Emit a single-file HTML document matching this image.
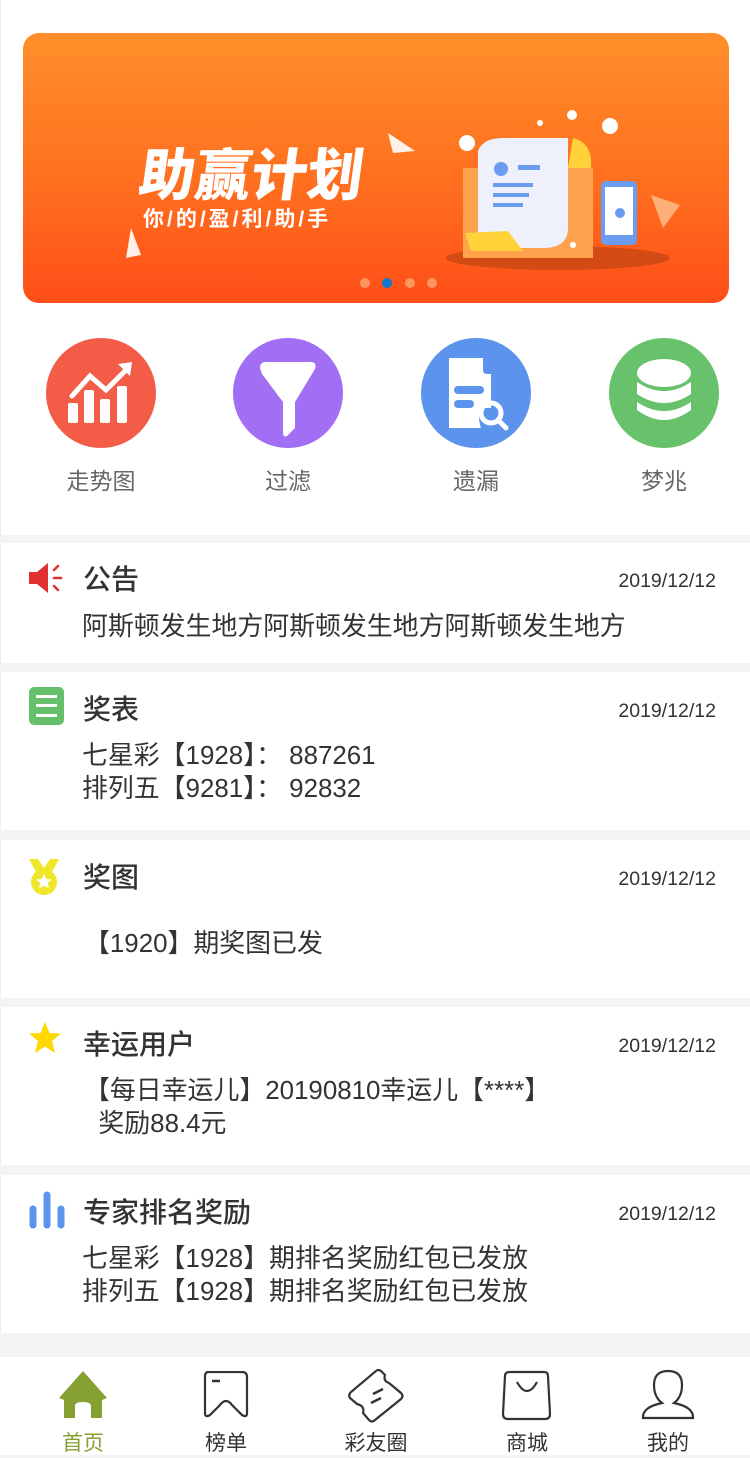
<!DOCTYPE html>
<html><head><meta charset="utf-8"><style>
*{margin:0;padding:0;box-sizing:border-box}
body{width:750px;height:1458px;background:#f4f4f4;font-family:"Liberation Sans","Noto Sans CJK SC",sans-serif;color:#333;position:relative;overflow:hidden}
.abs{position:absolute}
.top{left:0;top:0;width:750px;height:535px;background:#fff;border-left:1px solid #eee}
.banner{left:23px;top:33px;width:706px;height:270px;border-radius:16px;background:linear-gradient(180deg,#ff8f2a 0%,#ff6c1e 60%,#ff4e18 100%);overflow:hidden}
.circ{width:110px;height:110px;border-radius:50%;top:338px}
.lbl{top:462px;width:160px;text-align:center;font-size:23px;color:#666}
.card{left:0;width:750px;background:#fff;border-left:1px solid #eee}
.t{left:83px;font-size:28px;font-weight:500;color:#333}
.d{right:34px;font-size:19.5px;color:#333}
.b{left:82px;font-size:25.9px;line-height:33px;color:#333}
.tab{left:0;top:1357px;width:750px;height:98px;background:#fff}
.ti{font-size:21px;color:#333;width:120px;text-align:center;top:1427px}
</style></head><body>
<div class="abs top"></div>
<div class="abs banner">
 <div class="abs" style="left:117px;top:98px;font-size:56px;font-weight:900;color:#fff;letter-spacing:0px;transform:skewX(-8deg)">助赢计划</div>
 <div class="abs" style="left:120px;top:170px;font-size:21px;font-weight:bold;color:#fff;letter-spacing:3px">你/的/盈/利/助/手</div>
 <svg class="abs" style="left:0;top:0" width="706" height="270">
  <polygon points="365,100 392,118 370,120" fill="#fff" opacity=".9"/>
  <polygon points="108,195 118,222 103,225" fill="#fff" opacity=".9"/>
  <polygon points="628,162 657,172 640,195" fill="#ffb07a"/>
  <ellipse cx="535" cy="225" rx="112" ry="12" fill="#d44a14"/>
  <rect x="440" y="135" width="130" height="90" fill="#ffa24e"/>
  <path d="M455 118 Q460 105 480 105 L545 105 L545 195 Q545 215 520 215 L455 215 Z" fill="#eef0fb"/>
  <path d="M550 105 Q570 110 568 135 L545 135 Z" fill="#ffd23a"/>
  <path d="M442 200 L485 198 L500 218 L448 218 Z" fill="#ffd23a"/>
  <rect x="470" y="150" width="40" height="4" fill="#6b9cf0"/><rect x="470" y="160" width="36" height="4" fill="#6b9cf0"/><rect x="470" y="170" width="30" height="4" fill="#6b9cf0"/>
  <rect x="495" y="132" width="22" height="5" fill="#6b9cf0"/><circle cx="478" cy="136" r="7" fill="#6b9cf0"/>
  <rect x="578" y="148" width="36" height="64" rx="5" fill="#6b9cf0"/><rect x="582" y="154" width="28" height="48" fill="#fff"/>
  <circle cx="597" cy="180" r="5" fill="#6b9cf0"/>
  <circle cx="444" cy="110" r="8" fill="#fff"/><circle cx="587" cy="93" r="8" fill="#fff"/><circle cx="549" cy="82" r="5" fill="#fff"/><circle cx="517" cy="90" r="3" fill="#fff"/><circle cx="550" cy="212" r="3" fill="#fff"/>
  <circle cx="342" cy="250" r="5" fill="#ff9660"/><circle cx="364" cy="250" r="5" fill="#0b7ad0"/><circle cx="387" cy="250" r="5" fill="#ff9660"/><circle cx="409" cy="250" r="5" fill="#ff9660"/>
 </svg>
</div>
<div class="abs circ" style="left:46px;background:#f35d48"><svg width="110" height="110"><g fill="#fff"><rect x="22" y="65" width="10" height="20" rx="2"/><rect x="38" y="52" width="10" height="33" rx="2"/><rect x="54" y="61" width="10" height="24" rx="2"/><rect x="71" y="48" width="10" height="37" rx="2"/></g><polyline points="26,58 44,38 60,52 82,30" fill="none" stroke="#fff" stroke-width="5" stroke-linecap="round"/><polygon points="72,26 86,24 84,38" fill="#fff"/></svg></div>
<div class="abs circ" style="left:233px;background:#a26ef4"><svg width="110" height="110"><path d="M27 30 Q27 24 33 24 L78 24 Q84 24 82 31 L62 64 L62 90 L54 98 Q50 100 50 94 L50 64 L29 36 Z" fill="#fff"/></svg></div>
<div class="abs circ" style="left:421px;background:#5b93ed"><svg width="110" height="110"><path d="M28 20 L62 20 L62 32 Q62 36 66 36 L70 36 L70 70 L60 70 Q56 78 60 90 L28 90 Z" fill="#fff"/><rect x="33" y="48" width="30" height="8" rx="4" fill="#5b93ed"/><rect x="33" y="62" width="20" height="8" rx="4" fill="#5b93ed"/><circle cx="70" cy="75" r="10" fill="none" stroke="#fff" stroke-width="5"/><line x1="77" y1="82" x2="85" y2="90" stroke="#fff" stroke-width="5" stroke-linecap="round"/></svg></div>
<div class="abs circ" style="left:609px;background:#68c26c"><svg width="110" height="110"><g fill="#fff"><ellipse cx="55" cy="35" rx="27" ry="14"/><path d="M28 44 Q55 62 82 44 L82 56 Q55 74 28 56Z"/><path d="M28 64 Q55 82 82 64 L82 72 Q55 92 28 72Z"/></g></svg></div>
<div class="abs lbl" style="left:21px">走势图</div>
<div class="abs lbl" style="left:208px">过滤</div>
<div class="abs lbl" style="left:396px">遗漏</div>
<div class="abs lbl" style="left:584px">梦兆</div>

<div class="abs card" style="top:543px;height:120px"></div>
<svg class="abs" style="left:28px;top:562px" width="36" height="32"><path d="M1 10 L9 10 L20 1 L20 31 L9 22 L1 22 Z" fill="#e03232"/><g stroke="#e03232" stroke-width="2.5" stroke-linecap="round"><line x1="26" y1="8" x2="30" y2="4"/><line x1="26" y1="16" x2="33" y2="16"/><line x1="26" y1="24" x2="30" y2="28"/></g></svg>
<div class="abs t" style="top:558px">公告</div><div class="abs d" style="top:570px">2019/12/12</div>
<div class="abs b" style="top:611px">阿斯顿发生地方阿斯顿发生地方阿斯顿发生地方</div>

<div class="abs card" style="top:672px;height:158px"></div>
<svg class="abs" style="left:29px;top:687px" width="35" height="38"><rect width="35" height="38" rx="5" fill="#66c06b"/><rect x="7" y="8" width="21" height="3" fill="#fff"/><rect x="7" y="17" width="21" height="3" fill="#fff"/><rect x="7" y="27" width="21" height="3" fill="#fff"/></svg>
<div class="abs t" style="top:688px">奖表</div><div class="abs d" style="top:700px">2019/12/12</div>
<div class="abs b" style="top:740px">七星彩【1928】：&nbsp;887261<br>排列五【9281】：&nbsp;92832</div>

<div class="abs card" style="top:840px;height:158px"></div>
<svg class="abs" style="left:28px;top:858px" width="32" height="38"><path d="M1 1 L10 1 L16 10 L22 1 L31 1 L24 14 L8 14 Z" fill="#f0e62a"/><circle cx="16" cy="24" r="13" fill="#f0e62a"/><polygon points="16,16 18.4,21 24,21.5 19.8,25 21,30.5 16,27.6 11,30.5 12.2,25 8,21.5 13.6,21" fill="#fff"/></svg>
<div class="abs t" style="top:856px">奖图</div><div class="abs d" style="top:868px">2019/12/12</div>
<div class="abs b" style="top:928px;left:84px">【1920】期奖图已发</div>

<div class="abs card" style="top:1007px;height:158px"></div>
<svg class="abs" style="left:27px;top:1021px" width="36" height="34"><polygon points="18,1 22.5,12 34,12.5 25,20 28,32 18,25.5 8,32 11,20 2,12.5 13.5,12" fill="#ffd800"/></svg>
<div class="abs t" style="top:1023px">幸运用户</div><div class="abs d" style="top:1035px">2019/12/12</div>
<div class="abs b" style="top:1075px;left:84px">【每日幸运儿】20190810幸运儿【****】<br>&nbsp;&nbsp;奖励88.4元</div>

<div class="abs card" style="top:1175px;height:158px"></div>
<svg class="abs" style="left:29px;top:1190px" width="38" height="40"><g stroke="#5b93ed" stroke-width="7" stroke-linecap="round"><line x1="4" y1="19" x2="4" y2="35"/><line x1="18" y1="5" x2="18" y2="35"/><line x1="32" y1="19" x2="32" y2="35"/></g></svg>
<div class="abs t" style="top:1191px">专家排名奖励</div><div class="abs d" style="top:1203px">2019/12/12</div>
<div class="abs b" style="top:1243px">七星彩【1928】期排名奖励红包已发放<br>排列五【1928】期排名奖励红包已发放</div>

<div class="abs tab"></div>
<svg class="abs" style="left:57px;top:1370px" width="52" height="50"><path d="M26 1 L50 28 L45 30 L45 48 L34 48 L34 36 Q34 32 26 32 Q18 32 18 36 L18 48 L7 48 L7 30 L2 28 Z" fill="#86a031"/></svg>
<svg class="abs" style="left:202px;top:1371px" width="48" height="50"><path d="M6 1 L40 1 Q45 1 45 6 L45 42 Q45 47 40 44 L30 34 Q24 26 18 34 L8 44 Q3 47 3 42 L3 6 Q3 1 6 1 Z" fill="none" stroke="#333" stroke-width="2.2"/><line x1="10" y1="10" x2="18" y2="10" stroke="#333" stroke-width="2.5"/></svg>
<svg class="abs" style="left:345px;top:1368px" width="62" height="56"><path d="M36 3 L40 7 Q38 13 44 15 L56 25 Q59 28 56 31 L30 52 Q27 55 24 52 L18 45 Q20 38 12 36 L5 30 Q3 27 6 24 L31 3 Q33 1 36 3 Z" fill="none" stroke="#333" stroke-width="2.2"/><line x1="28" y1="26" x2="38" y2="21" stroke="#333" stroke-width="2.5"/><line x1="26" y1="35" x2="36" y2="30" stroke="#333" stroke-width="2.5"/></svg>
<svg class="abs" style="left:501px;top:1370px" width="52" height="52"><path d="M9 2 L43 2 Q47 2 47 6 L49 44 Q49 49 44 49 L7 49 Q2 49 2 44 L4 6 Q4 2 9 2 Z" fill="none" stroke="#333" stroke-width="2.2"/><path d="M16 12 Q26 30 36 12" fill="none" stroke="#333" stroke-width="2.2"/></svg>
<svg class="abs" style="left:640px;top:1369px" width="56" height="52"><path d="M22 34 Q14 28 14 16 Q14 2 28 2 Q42 2 42 16 Q42 28 34 34 Q53 38 53 48 L53 49 L3 49 L3 48 Q3 38 22 34 Z" fill="none" stroke="#333" stroke-width="2.2"/></svg>
<div class="abs ti" style="left:23px;color:#86a031">首页</div>
<div class="abs ti" style="left:166px">榜单</div>
<div class="abs ti" style="left:316px">彩友圈</div>
<div class="abs ti" style="left:467px">商城</div>
<div class="abs ti" style="left:608px">我的</div>
</body></html>
